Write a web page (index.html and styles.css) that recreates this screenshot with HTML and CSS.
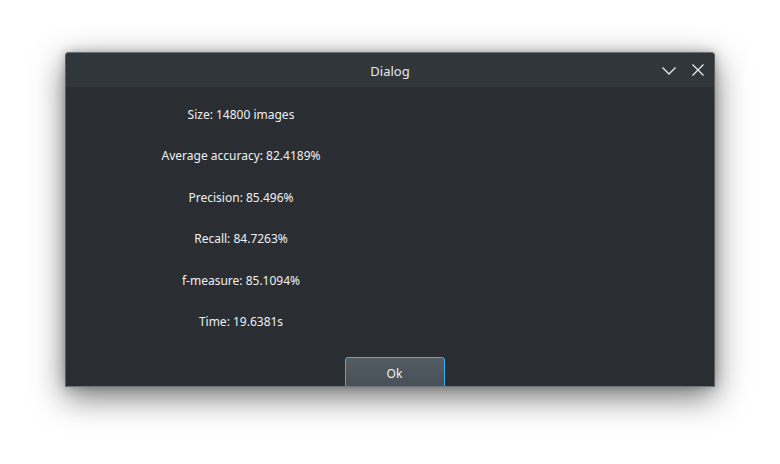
FILE: index.html
```html
<!DOCTYPE html>
<html>
<head>
<meta charset="utf-8">
<link rel="stylesheet" href="styles.css">
</head>
<body>
<div class="stage">
  <div class="window">
    <div class="titlebar">
      <span class="title">Dialog</span>
      <div class="controls">
        <svg class="ctl" width="16" height="16" viewBox="0 0 16 16"><path d="M1.5 4.5 L8 11 L14.5 4.5" fill="none" stroke="#e8eaec" stroke-width="1.3"/></svg>
        <svg class="ctl" width="16" height="16" viewBox="0 0 16 16"><path d="M2.5 1.5 L13.5 12.5 M13.5 1.5 L2.5 12.5" fill="none" stroke="#e8eaec" stroke-width="1.3"/></svg>
      </div>
    </div>
    <div class="body">
      <div class="labels">
        <div class="row">Size: 14800 images</div>
        <div class="row">Average accuracy: 82.4189%</div>
        <div class="row">Precision: 85.496%</div>
        <div class="row">Recall: 84.7263%</div>
        <div class="row">f-measure: 85.1094%</div>
        <div class="row">Time: 19.6381s</div>
      </div>
      <div class="actions">
        <button class="ok">Ok</button>
      </div>
    </div>
  </div>
</div>
</body>
</html>
```
FILE: styles.css
```css
html, body {
  margin: 0;
  padding: 0;
  background: #ffffff;
  width: 780px;
  height: 464px;
  overflow: hidden;
}
.stage {
  padding-top: 52px;
  padding-left: 65px;
}
.window {
  width: 650px;
  height: 335px;
  box-sizing: border-box;
  border: 1px solid #5b6064;
  border-top-color: #6a6f74;
  border-bottom-color: #70757a;
  border-radius: 4px 4px 0 0;
  background: #2a2e32;
  box-shadow: 0 10px 32px rgba(0,0,0,0.55), 0 0 10px rgba(0,0,0,0.25);
  display: flex;
  flex-direction: column;
  overflow: hidden;
  font-family: "Noto Sans", sans-serif;
  color: #fcfcfc;
}
.titlebar {
  height: 34px;
  flex: none;
  background: #31363b;
  display: flex;
  align-items: center;
  justify-content: center;
  position: relative;
}
.title {
  font-size: 13px;
  color: #e6e8ea;
  margin-top: 2px;
}
.controls {
  position: absolute;
  right: 8px;
  top: 10px;
  display: flex;
  gap: 13px;
}
.body {
  flex: 1;
  display: flex;
  flex-direction: column;
  overflow: hidden;
}
.labels {
  width: 350px;
  display: flex;
  flex-direction: column;
  padding-top: 19px;
  gap: 23.4px;
}
.row {
  text-align: center;
  font-size: 12px;
  line-height: 18px;
  color: #eff0f1;
}
.actions {
  display: flex;
  justify-content: center;
  padding-left: 9px;
  margin-top: 26px;
}
.ok {
  flex: none;
  width: 100px;
  height: 34px;
  box-sizing: border-box;
  border: 1px solid #3daee9;
  border-radius: 3px;
  background: linear-gradient(#535c63, #474f56);
  color: #f0f1f2;
  font-family: "Noto Sans", sans-serif;
  font-size: 12px;
  padding: 0;
}
```
